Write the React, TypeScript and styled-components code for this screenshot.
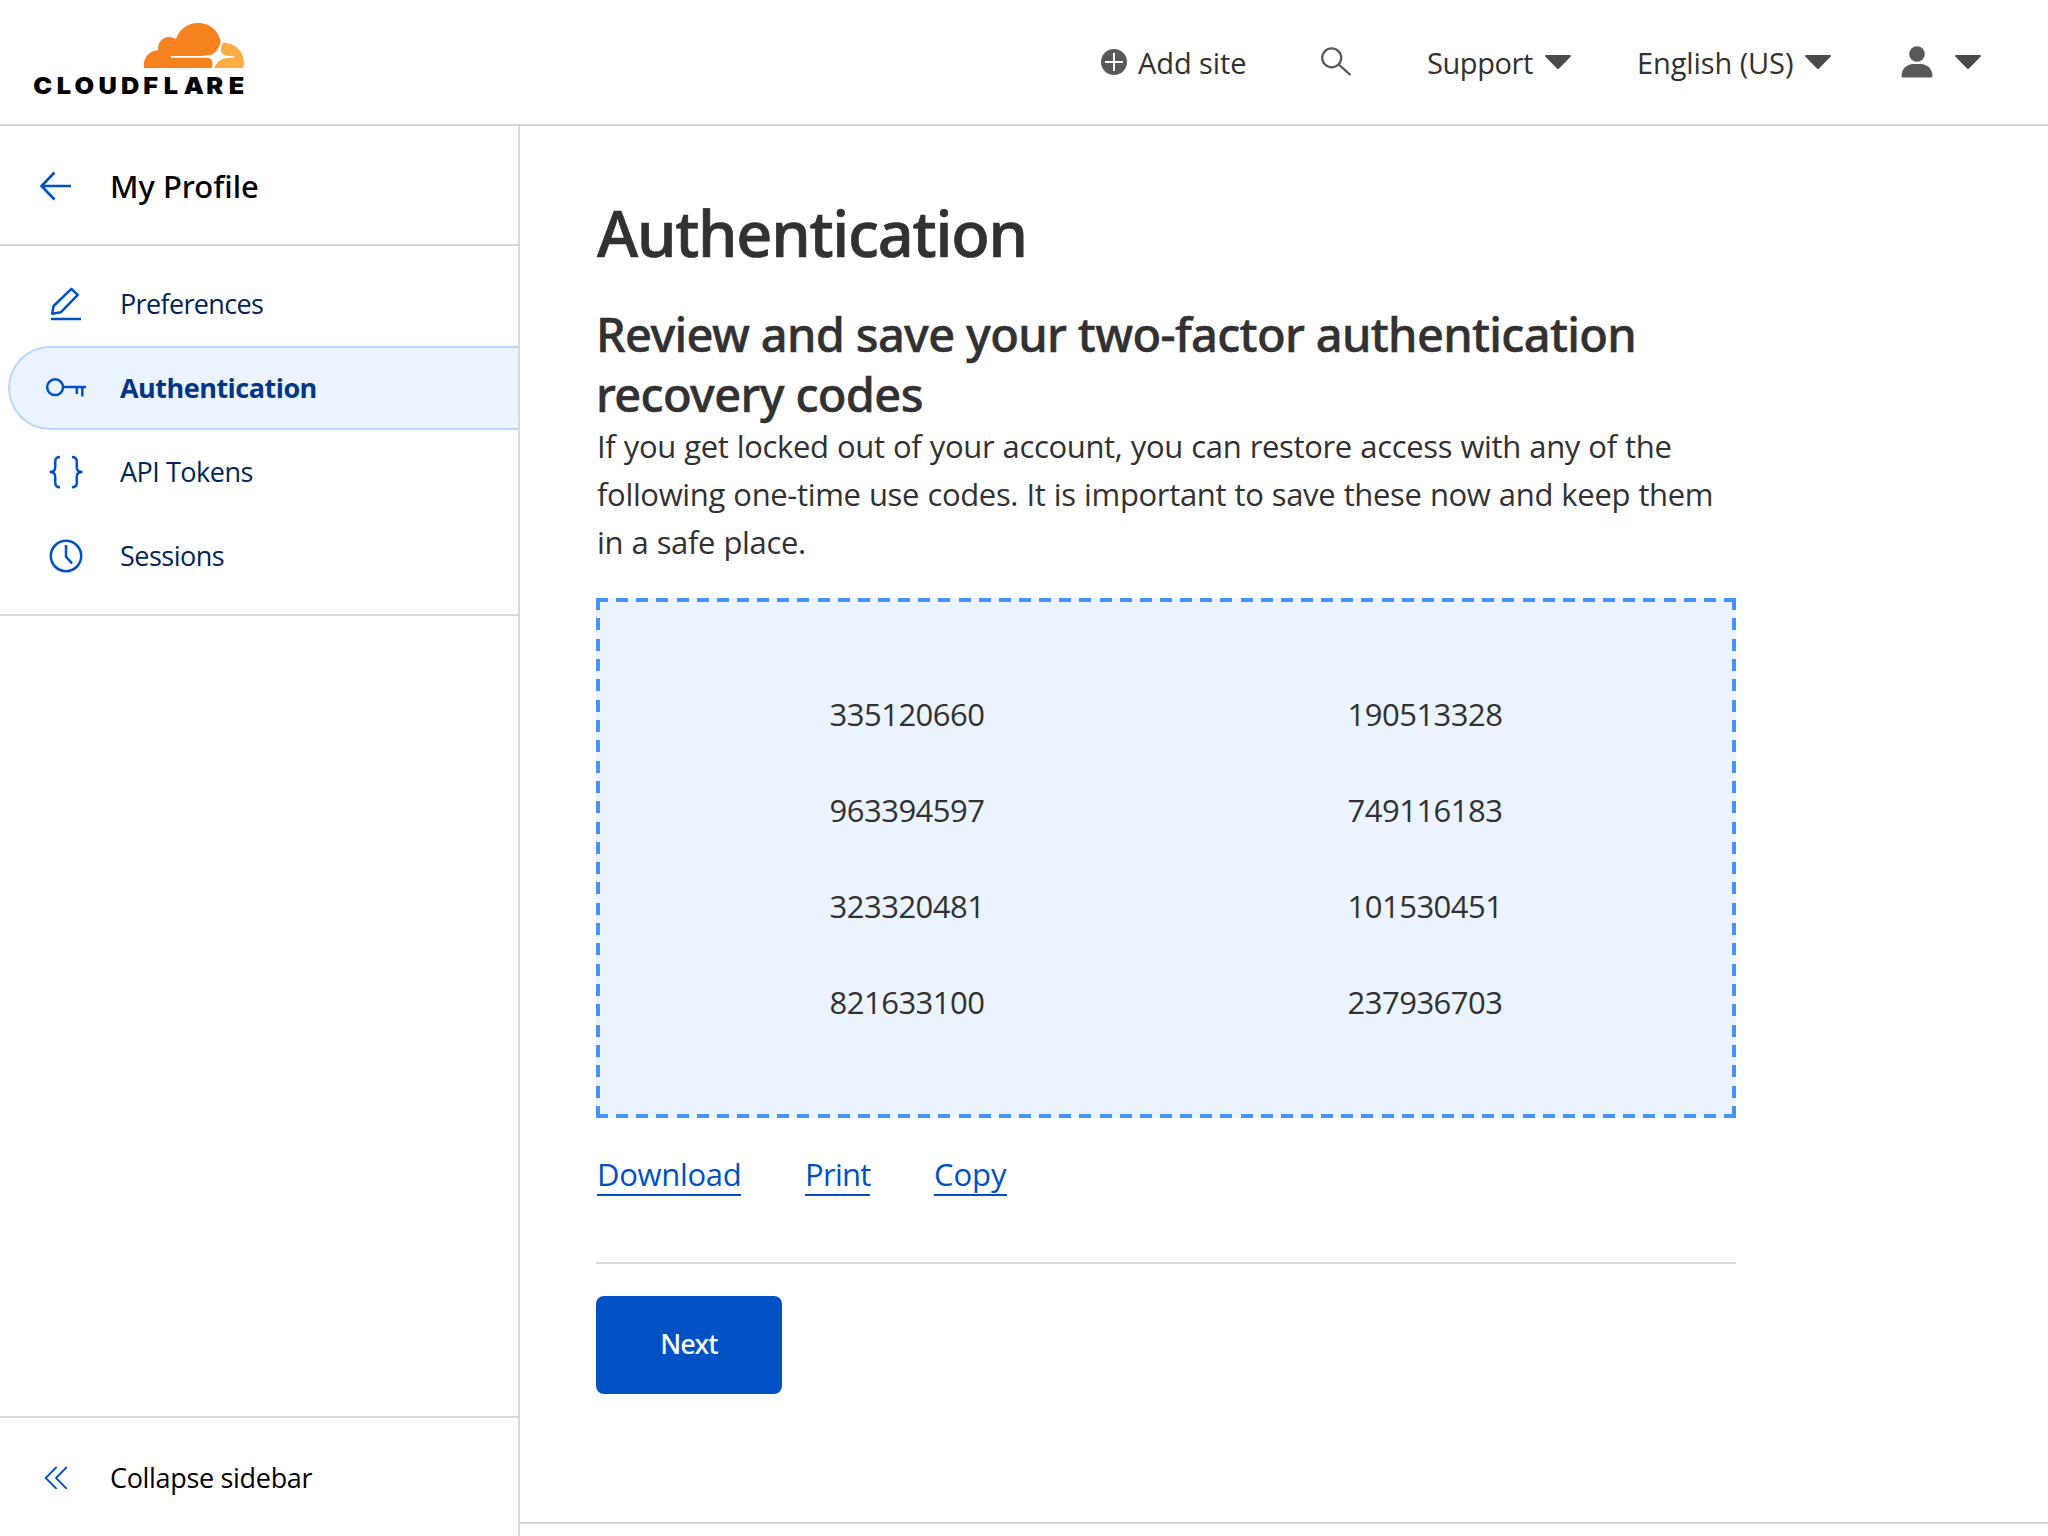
import React from "react";
import styled, { createGlobalStyle } from "styled-components";

const line = "#d9d9d9";
const blue = "#0051c3";
const ink = "#313131";
const dash = "#4693ff";

const GlobalStyle = createGlobalStyle`
  *, *::before, *::after { box-sizing: border-box; }
  html, body { margin: 0; padding: 0; background: #fff; }
  body { font-family: "Open Sans", "Noto Sans", sans-serif; color: ${ink}; overflow: hidden; }
  svg { display: block; flex: none; }
`;

const Page = styled.div`
  display: flex;
  flex-direction: column;
  width: 2048px;
  height: 1536px;
  background: #fff;
`;

const Header = styled.header`
  display: flex;
  align-items: center;
  justify-content: space-between;
  flex: none;
  height: 126px;
  padding: 0 67px 0 30px;
  border-bottom: 2px solid ${line};
`;

const LogoLink = styled.a`
  display: block;
  margin-top: -8px;
`;

const Wordmark = styled.text`
  font-family: Inter, sans-serif;
  font-weight: 900;
  font-size: 69px;
  fill: #000;
`;

const HeaderNav = styled.nav`
  display: flex;
  align-items: center;
`;

const HeaderItem = styled.div<{ $gap: number; $before?: number }>`
  display: flex;
  align-items: center;
  gap: ${(p) => p.$gap}px;
  margin-left: ${(p) => p.$before ?? 0}px;
`;

const HeaderLabel = styled.span<{ $width: number; $tracking: number }>`
  width: ${(p) => p.$width}px;
  padding-top: 1px;
  font-size: 29px;
  line-height: 40px;
  letter-spacing: ${(p) => p.$tracking}px;
  white-space: nowrap;
`;

const Body = styled.div`
  display: flex;
  flex: 1;
  min-height: 0;
`;

const Sidebar = styled.aside`
  display: flex;
  flex-direction: column;
  flex: none;
  width: 520px;
  border-right: 2px solid ${line};
`;

const SidebarHeading = styled.div`
  display: flex;
  align-items: center;
  gap: 37px;
  flex: none;
  height: 120px;
  padding: 1px 0 0 39px;
  border-bottom: 2px solid ${line};
`;

const SidebarTitle = styled.div`
  font-family: "Noto Sans", sans-serif;
  font-size: 31px;
  font-weight: 500;
  line-height: 48px;
  letter-spacing: 0;
  color: #000;
`;

const NavList = styled.nav`
  display: flex;
  flex-direction: column;
  padding: 16px 0 16px 8px;
  border-bottom: 2px solid ${line};
`;

const NavItem = styled.a<{ $active?: boolean }>`
  display: flex;
  align-items: center;
  gap: 34px;
  height: 84px;
  padding-left: 36px;
  border: 2px solid ${(p) => (p.$active ? "#b9d6ff" : "transparent")};
  border-right: 0;
  border-radius: 42px 0 0 42px;
  background: ${(p) => (p.$active ? "#ebf3ff" : "transparent")};
  color: ${(p) => (p.$active ? "#003682" : "#00255a")};
  font-weight: ${(p) => (p.$active ? 700 : 400)};
`;

const NavLabel = styled.span<{ $tracking: number }>`
  font-size: 27px;
  line-height: 40px;
  letter-spacing: ${(p) => p.$tracking}px;
`;

const CollapseBar = styled.div`
  display: flex;
  align-items: center;
  gap: 42px;
  height: 120px;
  margin-top: auto;
  padding-left: 44px;
  border-top: 2px solid ${line};
`;

const CollapseLabel = styled.span`
  padding-top: 2px;
  font-size: 27px;
  line-height: 40px;
  letter-spacing: -0.32px;
  color: #000;
`;

const Main = styled.main`
  display: flex;
  flex-direction: column;
  flex: 1;
`;

const Content = styled.section`
  display: flex;
  flex-direction: column;
  flex: 1;
  width: 1216px;
  padding: 67px 0 0 76px;
`;

const Title = styled.h1`
  margin: 0 0 31px;
  padding-left: 1px;
  font-family: "Noto Sans", sans-serif;
  font-size: 63px;
  font-weight: 500;
  line-height: 80px;
  letter-spacing: -1.26px;
  -webkit-text-stroke: 0.7px ${ink};
`;

const Subtitle = styled.h2`
  margin: 0;
  font-family: "Noto Sans", sans-serif;
  font-size: 47px;
  font-weight: 500;
  line-height: 60px;
  letter-spacing: -0.67px;
  white-space: nowrap;
  -webkit-text-stroke: 0.5px ${ink};
`;

const Lead = styled.p`
  margin: -2px 0 32px;
  padding-left: 1px;
  font-size: 31px;
  line-height: 48px;
  letter-spacing: -0.34px;
  word-spacing: 0.6px;
  white-space: nowrap;
`;

/* Long 12px dashes on each edge, with a full dash meeting every corner. */
const CodeBox = styled.div`
  display: grid;
  grid-template-columns: 1fr 1fr;
  grid-auto-rows: 96px;
  height: 520px;
  padding: 68px 52px;
  background:
    repeating-linear-gradient(90deg, ${dash} 0 12px, transparent 12px 20.143px) top / 100% 4px no-repeat,
    repeating-linear-gradient(90deg, ${dash} 0 12px, transparent 12px 20.143px) bottom / 100% 4px no-repeat,
    repeating-linear-gradient(180deg, ${dash} 0 12px, transparent 12px 20.32px) left / 4px 100% no-repeat,
    repeating-linear-gradient(180deg, ${dash} 0 12px, transparent 12px 20.32px) right / 4px 100% no-repeat,
    #ebf3ff;
`;

const Code = styled.div`
  display: flex;
  align-items: center;
  justify-content: center;
  font-size: 31px;
  letter-spacing: -0.52px;
`;

const LinkRow = styled.div`
  display: flex;
  gap: 64px;
  padding-top: 36px;
  padding-left: 1px;
`;

const TextLink = styled.a<{ $width: number; $tracking: number }>`
  width: ${(p) => p.$width}px;
  height: 42px;
  border-bottom: 2px solid ${blue};
  color: ${blue};
  font-size: 31px;
  line-height: 40px;
  letter-spacing: ${(p) => p.$tracking}px;
  white-space: nowrap;
`;

const Rule = styled.hr`
  width: 100%;
  height: 2px;
  margin: 66px 0 32px;
  border: 0;
  background: ${line};
`;

const NextButton = styled.button`
  width: 186px;
  height: 98px;
  padding: 0 0 4px;
  border: 0;
  border-radius: 8px;
  background: ${blue};
  color: #fff;
  font-family: "Noto Sans", sans-serif;
  font-size: 27px;
  font-weight: 500;
  letter-spacing: -0.8px;
`;

const FooterEdge = styled.footer`
  flex: none;
  height: 14px;
  border-top: 2px solid ${line};
`;

const Logo = () => (
  <svg width="230" height="84" viewBox="0 0 690 252" role="img">
    <path
      fill="#f6821f"
      d="M342 156C337 128 357 104 385 103C381 76 402 62 418 63C426 63 432 66 438 69C447 42 470 21 504 21C540 21 564 43 572 75C570 90 560 118 531 118L515 120H423V125H530C547 126 551 137 545 156Z"
    />
    <path
      fill="#fbad41"
      d="M578 80C614 79 642 106 642 141C642 147 641 152 639 156H554C558 141 569 130 586 127L613 124V121L590 119C574 116 570 104 574 93Z"
    />
    <Wordmark
      transform="scale(1.100 1)"
      x="8.600 72.700 121.200 186.500 248.200 309 364.700 419 481 542"
      y="233"
    >
      CLOUDFLARE
    </Wordmark>
  </svg>
);

const PlusIcon = () => (
  <svg width="26" height="26" viewBox="0 0 26 26" fill="none">
    <circle cx="13" cy="13" r="13" fill="#595959" />
    <path d="M13 4v18M4 13h18" stroke="#fff" strokeWidth="2" />
  </svg>
);

const SearchIcon = () => (
  <svg width="30" height="30" viewBox="0 0 30 30" fill="none" stroke="#595959" strokeWidth="2.300">
    <circle cx="10.7" cy="10.8" r="9.500" />
    <path d="M17.8 17.6L29.4 28" />
  </svg>
);

const Caret = () => (
  <svg width="26" height="14" viewBox="0 0 26 14">
    <path
      fill="#4a4a4a"
      d="M1 0H25C26 0 26.300 1 25.500 1.700L14 13.500Q13 14.500 12 13.500L.5 1.700C-.3 1 0 0 1 0Z"
    />
  </svg>
);

const UserIcon = () => (
  <svg width="32" height="32" viewBox="0 0 32 32" fill="#595959">
    <circle cx="16" cy="8" r="7.8" />
    <path d="M.6 29.500C.6 23 6 18 12 18H20C26 18 31.400 23 31.400 29.500C31.400 31 31 31.500 30 31.500H2C1 31.500 .6 31 .6 29.500Z" />
  </svg>
);

const BackIcon = () => (
  <svg width="34" height="30" viewBox="0 0 34 30" fill="none" stroke={blue} strokeWidth="2.600">
    <path d="M15.500 1.500L2.500 15L15.500 28.500M2.500 15H32" />
  </svg>
);

const NavSvg = ({ children }: { children: React.ReactNode }) => (
  <svg width="40" height="40" viewBox="0 0 40 40" fill="none" stroke={blue} strokeWidth="2.500">
    {children}
  </svg>
);

const PenIcon = () => (
  <NavSvg>
    <path d="M6.200 29.700L7.600 22L25.400 4.800L31.800 10.900L15 28.200Z" strokeLinejoin="round" />
    <path d="M5 35H35" />
  </NavSvg>
);

const KeyIcon = () => (
  <NavSvg>
    <circle cx="9.100" cy="19.200" r="7.900" />
    <path d="M17.500 19H40M30.800 19V26M36.300 19V28.500" />
  </NavSvg>
);

const BracesIcon = () => (
  <NavSvg>
    <path d="M14 5C10.500 5 9.200 6.500 9.200 9.500V15.500C9.200 18.500 7.500 20 3.600 20C7.500 20 9.200 21.500 9.200 24.500V30.700C9.200 33.700 10.500 35.200 14 35.200" />
    <path d="M26 5C29.500 5 30.800 6.500 30.800 9.500V15.500C30.800 18.500 32.500 20 36.400 20C32.500 20 30.800 21.500 30.800 24.500V30.700C30.800 33.700 29.500 35.200 26 35.200" />
  </NavSvg>
);

const ClockIcon = () => (
  <NavSvg>
    <circle cx="20" cy="20" r="15.200" />
    <path d="M20 9V20.800L26 27.400" />
  </NavSvg>
);

const CollapseIcon = () => (
  <svg width="24" height="24" viewBox="0 0 24 24" fill="none" stroke={blue} strokeWidth="1.800">
    <path d="M12.600 2L1.700 13L12.600 24M22.800 2L12 13L22.800 24" />
  </svg>
);

const navItems = [
  { label: "Preferences", icon: <PenIcon />, tracking: -0.66 },
  { label: "Authentication", icon: <KeyIcon />, tracking: -0.52, active: true },
  { label: "API Tokens", icon: <BracesIcon />, tracking: -0.49 },
  { label: "Sessions", icon: <ClockIcon />, tracking: -0.5 },
];

const codes = [
  "335120660", "190513328",
  "963394597", "749116183",
  "323320481", "101530451",
  "821633100", "237936703",
];

export default function App() {
  return (
    <>
      <GlobalStyle />
      <Page>
        <Header>
          <LogoLink>
            <Logo />
          </LogoLink>
          <HeaderNav>
            <HeaderItem $gap={11}>
              <PlusIcon />
              <HeaderLabel $width={109} $tracking={-0.1}>Add site</HeaderLabel>
            </HeaderItem>
            <HeaderItem $gap={0} $before={74}>
              <SearchIcon />
            </HeaderItem>
            <HeaderItem $gap={11} $before={76}>
              <HeaderLabel $width={107} $tracking={-0.41}>Support</HeaderLabel>
              <Caret />
            </HeaderItem>
            <HeaderItem $gap={11} $before={66}>
              <HeaderLabel $width={157} $tracking={-0.1}>English (US)</HeaderLabel>
              <Caret />
            </HeaderItem>
            <HeaderItem $gap={22} $before={70}>
              <UserIcon />
              <Caret />
            </HeaderItem>
          </HeaderNav>
        </Header>
        <Body>
          <Sidebar>
            <SidebarHeading>
              <BackIcon />
              <SidebarTitle>My Profile</SidebarTitle>
            </SidebarHeading>
            <NavList>
              {navItems.map((item) => (
                <NavItem key={item.label} $active={item.active}>
                  {item.icon}
                  <NavLabel $tracking={item.tracking}>{item.label}</NavLabel>
                </NavItem>
              ))}
            </NavList>
            <CollapseBar>
              <CollapseIcon />
              <CollapseLabel>Collapse sidebar</CollapseLabel>
            </CollapseBar>
          </Sidebar>
          <Main>
            <Content>
              <Title>Authentication</Title>
              <Subtitle>
                Review and save your two-factor authentication
                <br />
                recovery codes
              </Subtitle>
              <Lead>
                If you get locked out of your account, you can restore access with any of the
                <br />
                following one-time use codes. It is important to save these now and keep them
                <br />
                in a safe place.
              </Lead>
              <CodeBox>
                {codes.map((code) => (
                  <Code key={code}>{code}</Code>
                ))}
              </CodeBox>
              <LinkRow>
                <TextLink $width={144} $tracking={-0.3}>Download</TextLink>
                <TextLink $width={65} $tracking={-0.7}>Print</TextLink>
                <TextLink $width={73} $tracking={-0.05}>Copy</TextLink>
              </LinkRow>
              <Rule />
              <NextButton>Next</NextButton>
            </Content>
            <FooterEdge />
          </Main>
        </Body>
      </Page>
    </>
  );
}
